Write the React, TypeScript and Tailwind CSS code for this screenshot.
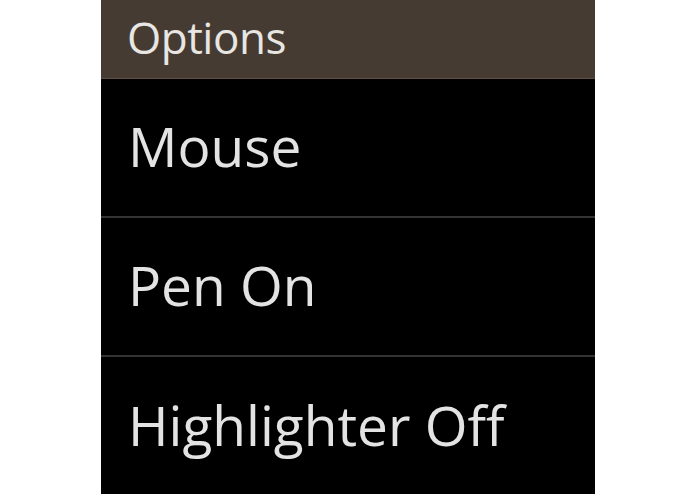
import React from "react";

export default function App() {
  const items = ["Mouse", "Pen On", "Highlighter Off"];
  return (
    <div className="w-[695px] h-[494px] bg-white flex justify-center overflow-hidden" style={{ fontFamily: '"Open Sans", "Noto Sans", sans-serif' }}>
      <div className="w-[494px] ml-[1px] h-[494px] bg-black flex flex-col">
        <div className="h-[79px] shrink-0 bg-[#453b32] border-b border-[#5e4f42] flex items-center pl-[26px]">
          <span className="text-[44px] font-medium leading-none text-[#e8e6e3] -mt-[4px] tracking-[-0.5px]">Options</span>
        </div>
        {items.map((t, i) => (
          <div
            key={t}
            className={`h-[139px] shrink-0 flex items-center pl-[27px] ${i < 2 ? "border-b-2 border-[#333333]" : ""}`}
          >
            <span className="text-[55px] leading-none text-[#e3e3e3] -mt-[4px]">{t}</span>
          </div>
        ))}
      </div>
    </div>
  );
}
